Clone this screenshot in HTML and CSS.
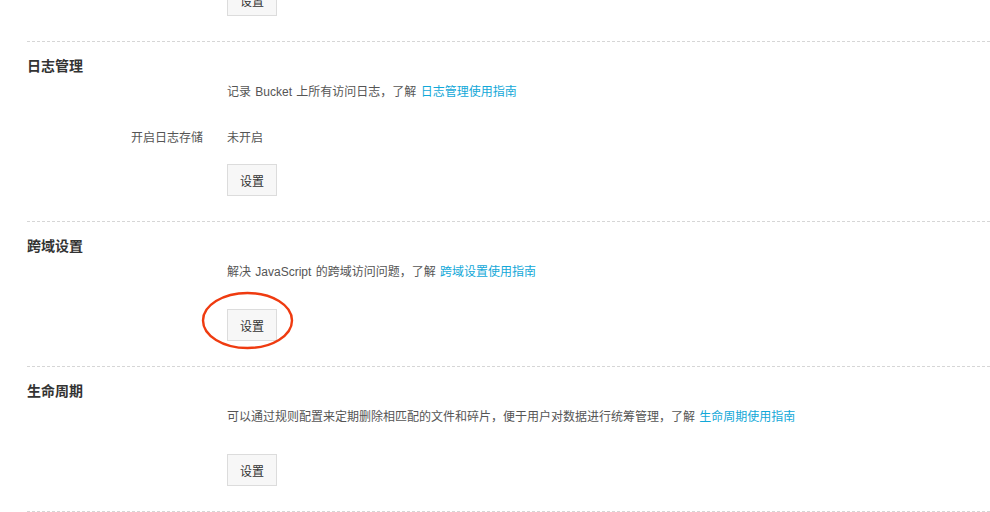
FILE: index.html
```html
<!DOCTYPE html>
<html lang="zh-CN">
<head>
<meta charset="utf-8">
<title>Bucket 设置</title>
<link rel="stylesheet" href="styles.css">
</head>
<body>
<div class="page">
  <div class="section section-tail">
    <div class="row">
      <div class="label"></div>
      <div class="value"><button class="btn btn-cut">设置</button></div>
    </div>
  </div>

  <div class="section">
    <h3 class="title">日志管理</h3>
    <div class="row desc-row">
      <div class="label"></div>
      <div class="value desc">记录 Bucket 上所有访问日志，了解 <a class="link" href="#">日志管理使用指南</a></div>
    </div>
    <div class="row item-row">
      <div class="label">开启日志存储</div>
      <div class="value">未开启</div>
    </div>
    <div class="row btn-row btn-row-after-item">
      <div class="label"></div>
      <div class="value"><button class="btn">设置</button></div>
    </div>
  </div>

  <div class="section">
    <h3 class="title">跨域设置</h3>
    <div class="row desc-row">
      <div class="label"></div>
      <div class="value desc">解决 JavaScript 的跨域访问问题，了解 <a class="link" href="#">跨域设置使用指南</a></div>
    </div>
    <div class="row btn-row">
      <div class="label"></div>
      <div class="value">
        <span class="btn-wrap">
          <button class="btn">设置</button>
          <svg class="mark" width="93" height="59" viewBox="0 0 93 59" aria-hidden="true">
            <ellipse cx="46.5" cy="29.5" rx="44.5" ry="27.5" fill="none" stroke="#ef3b10" stroke-width="2.4"/>
          </svg>
        </span>
      </div>
    </div>
  </div>

  <div class="section">
    <h3 class="title">生命周期</h3>
    <div class="row desc-row">
      <div class="label"></div>
      <div class="value desc">可以通过规则配置来定期删除相匹配的文件和碎片，便于用户对数据进行统筹管理，了解 <a class="link" href="#">生命周期使用指南</a></div>
    </div>
    <div class="row btn-row">
      <div class="label"></div>
      <div class="value"><button class="btn">设置</button></div>
    </div>
  </div>
  <div class="section section-end"></div>
</div>
</body>
</html>
```

FILE: styles.css
```css
html, body {
  margin: 0;
  padding: 0;
  background: #ffffff;
}

body {
  font-family: "Liberation Sans", "Noto Sans CJK SC", sans-serif;
  font-size: 12px;
  color: #555555;
  overflow: hidden;
}

.page {
  margin-left: 27px;
}

.section {
  border-top: 1px dashed #d6d6d6;
  padding: 14px 0 25px;
}

.section-tail {
  border-top: none;
  padding: 0 0 25px;
}

.section-end {
  padding: 0;
}

.title {
  margin: 0;
  font-size: 14px;
  line-height: 20px;
  font-weight: bold;
  color: #333333;
}

.row {
  display: grid;
  grid-template-columns: 176px 1fr;
  column-gap: 24px;
  line-height: 20px;
}

.label {
  text-align: right;
  color: #555555;
}

.value {
  color: #555555;
}

.desc {
  word-spacing: 1px;
}

.desc-row {
  margin-top: 6px;
}

.item-row {
  margin-top: 26px;
}

.btn-row {
  margin-top: 27px;
}

.btn-row-after-item {
  margin-top: 16px;
}

.btn {
  display: block;
  box-sizing: border-box;
  width: 50px;
  height: 32px;
  padding: 0;
  border: 1px solid #dcdcdc;
  background: #f7f7f7;
  font-family: "Liberation Sans", "Noto Sans CJK SC", sans-serif;
  font-size: 12px;
  color: #333333;
  cursor: pointer;
}

.btn-cut {
  margin-top: -16px;
}

.link {
  color: #12a8d8;
  text-decoration: none;
}

.btn-wrap {
  position: relative;
  display: inline-block;
  vertical-align: top;
}

.mark {
  position: absolute;
  left: -26px;
  top: -18px;
  pointer-events: none;
}
```
